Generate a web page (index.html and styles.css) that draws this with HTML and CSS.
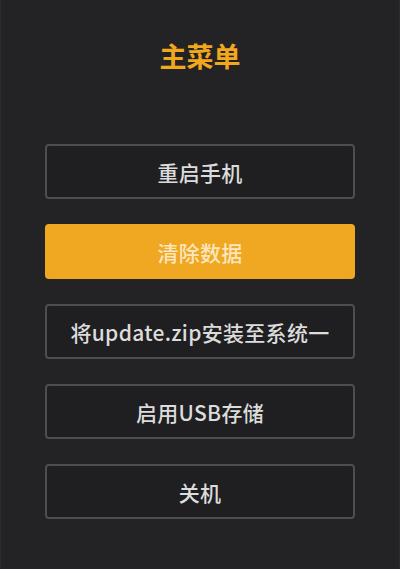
FILE: index.html
```html
<!DOCTYPE html>
<html lang="zh-CN">
<head>
<meta charset="utf-8">
<title>主菜单</title>
<link rel="stylesheet" href="styles.css">
</head>
<body>
<div class="screen">
  <h1 class="title">主菜单</h1>
  <nav class="menu">
    <div class="item">重启手机</div>
    <div class="item active">清除数据</div>
    <div class="item">将update.zip安装至系统一</div>
    <div class="item">启用USB存储</div>
    <div class="item">关机</div>
  </nav>
</div>
</body>
</html>
```
FILE: styles.css
```css
html, body {
  margin: 0;
  padding: 0;
  background: #232325;
}
.screen {
  width: 400px;
  height: 569px;
  box-sizing: border-box;
  border-left: 1px solid #2c2c2e;
  border-right: 1px solid #2c2c2e;
  padding: 37px 44px 0 44px;
  font-family: "Noto Sans CJK SC", "Noto Sans", sans-serif;
}
.title {
  margin: 0;
  height: 38px;
  line-height: 38px;
  text-align: center;
  font-size: 27px;
  font-weight: 700;
  color: #f2a81e;
}
.menu {
  margin-top: 69px;
  display: flex;
  flex-direction: column;
  gap: 25px;
}
.item {
  height: 55px;
  box-sizing: border-box;
  border: 2px solid #4e4e50;
  border-radius: 4px;
  background: #1f1f21;
  display: flex;
  align-items: center;
  justify-content: center;
  font-size: 21px;
  font-weight: 500;
  color: #dcdcdc;
  letter-spacing: 0.3px;
}
.item.active {
  background: #f0a722;
  border-color: #f0a722;
  color: #fce6be;
}
```
